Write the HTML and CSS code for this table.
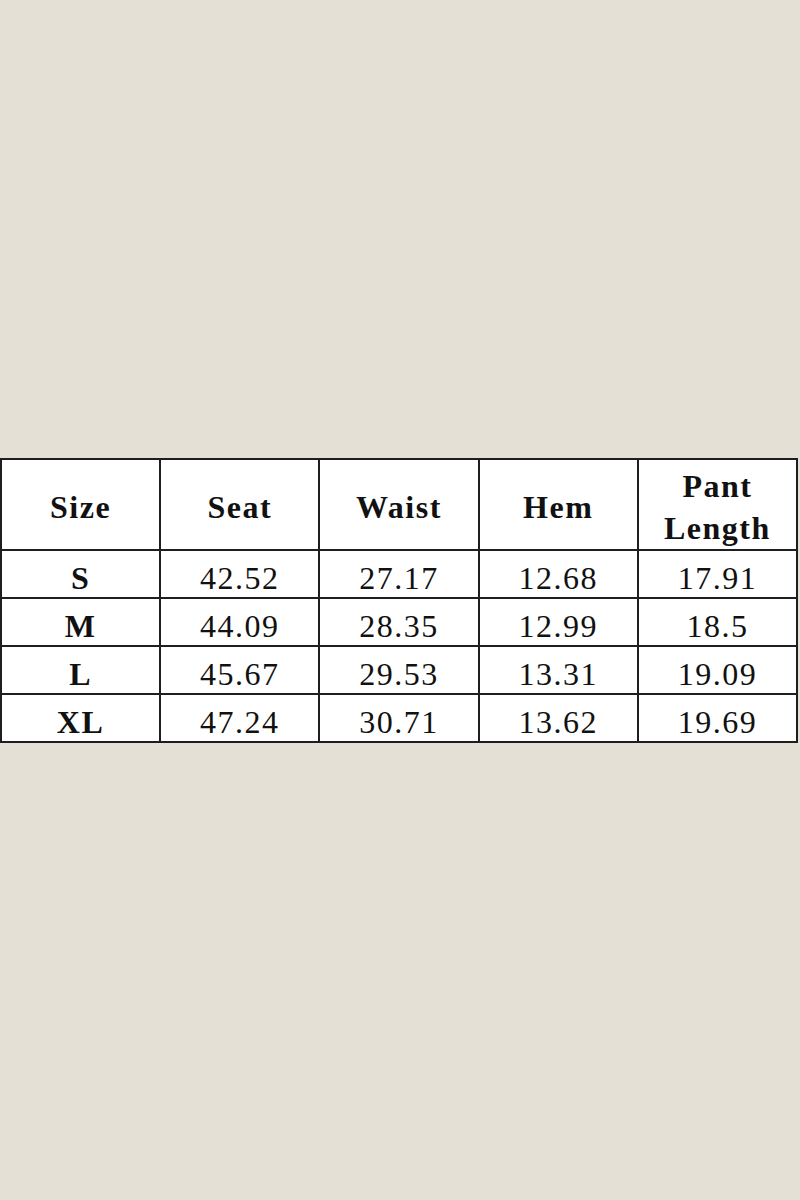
FILE: index.html
```html
<!DOCTYPE html>
<html lang="en">
<head>
<meta charset="utf-8">
<title>Size Chart</title>
<link rel="stylesheet" href="styles.css">
</head>
<body>
<main class="page">
  <table class="chart">
    <thead>
      <tr class="head">
        <th>Size</th>
        <th>Seat</th>
        <th>Waist</th>
        <th>Hem</th>
        <th>Pant<br>Length</th>
      </tr>
    </thead>
    <tbody>
      <tr><th>S</th><td>42.52</td><td>27.17</td><td>12.68</td><td>17.91</td></tr>
      <tr><th>M</th><td>44.09</td><td>28.35</td><td>12.99</td><td>18.5</td></tr>
      <tr><th>L</th><td>45.67</td><td>29.53</td><td>13.31</td><td>19.09</td></tr>
      <tr><th>XL</th><td>47.24</td><td>30.71</td><td>13.62</td><td>19.69</td></tr>
    </tbody>
  </table>
</main>
</body>
</html>
```

FILE: styles.css
```css
html, body {
  margin: 0;
  padding: 0;
  background: #e4e0d5;
}

.page {
  height: 1200px;
  display: flex;
  align-items: center;
  justify-content: flex-start;
}

.chart {
  border-collapse: collapse;
  table-layout: fixed;
  width: 798px;
  background: #ffffff;
  font-family: "Liberation Serif", "Times New Roman", serif;
  font-size: 32px;
  color: #111111;
  letter-spacing: 1.5px;
  margin-top: 1px;
}

.chart th,
.chart td {
  border: 2px solid #1e1e1e;
  text-align: center;
  vertical-align: middle;
  padding: 0;
}

.chart th { font-weight: bold; }
.chart td { font-weight: normal; }

.chart tbody tr { height: 48px; }
.chart .head th {
  line-height: 42px;
  padding-top: 5px;
}
.chart tbody th,
.chart tbody td {
  line-height: 36px;
  padding-top: 7px;
}
```
